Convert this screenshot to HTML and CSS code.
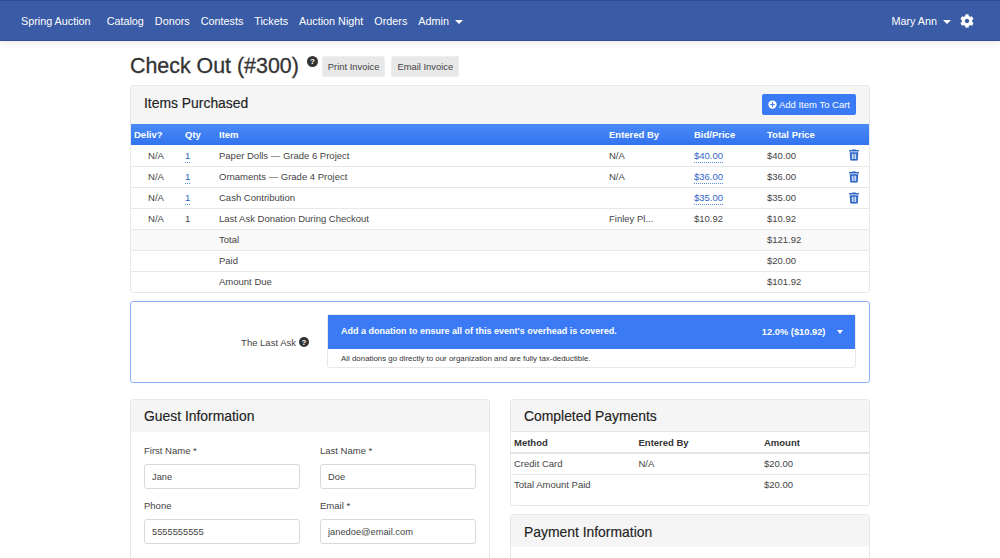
FILE: index.html
```html
<!DOCTYPE html>
<html lang="en">
<head>
<meta charset="utf-8">
<title>Check Out</title>
<link rel="stylesheet" href="styles.css">
</head>
<body>
<nav class="nav">
  <a class="brand">Spring Auction</a>
  <div class="nav-links">
    <a>Catalog</a><a>Donors</a><a>Contests</a><a>Tickets</a><a>Auction Night</a><a>Orders</a>
    <a class="drop">Admin <i class="caret"></i></a>
  </div>
  <div class="nav-right">
    <a class="drop">Mary Ann <i class="caret"></i></a>
    <svg class="gear" viewBox="0 0 512 512"><path fill="#fff" d="M487.4 315.7l-42.6-24.6c4.3-23.2 4.3-47 0-70.2l42.6-24.6c4.9-2.8 7.1-8.6 5.5-14-11.1-35.6-30-67.8-54.7-94.6-3.8-4.1-10-5.1-14.8-2.3L380.8 110c-17.9-15.4-38.5-27.3-60.8-35.1V25.8c0-5.6-3.9-10.5-9.4-11.7-36.7-8.2-74.3-7.8-109.2 0-5.5 1.2-9.4 6.1-9.4 11.7V75c-22.2 7.9-42.8 19.8-60.8 35.1L88.7 85.5c-4.9-2.8-11-1.9-14.8 2.3-24.7 26.7-43.6 58.9-54.7 94.6-1.7 5.4.6 11.2 5.5 14L67.3 221c-4.3 23.2-4.3 47 0 70.2l-42.6 24.6c-4.9 2.8-7.1 8.6-5.5 14 11.1 35.6 30 67.8 54.7 94.6 3.8 4.1 10 5.1 14.8 2.3l42.6-24.6c17.9 15.4 38.5 27.3 60.8 35.1v49.2c0 5.6 3.9 10.5 9.4 11.7 36.7 8.2 74.3 7.8 109.2 0 5.5-1.2 9.4-6.1 9.4-11.7v-49.2c22.2-7.9 42.8-19.8 60.8-35.1l42.6 24.6c4.9 2.8 11 1.9 14.8-2.3 24.7-26.7 43.6-58.9 54.7-94.6 1.5-5.5-.7-11.3-5.6-14.1zM256 336c-44.1 0-80-35.9-80-80s35.9-80 80-80 80 35.9 80 80-35.9 80-80 80z"/></svg>
  </div>
</nav>

<main class="page">
  <header class="title-row">
    <h1>Check Out (#300)</h1>
    <span class="help help-title">?</span>
    <button class="btn-grey">Print Invoice</button>
    <button class="btn-grey">Email Invoice</button>
  </header>

  <section class="card">
    <div class="card-head card-head-items">
      <h2>Items Purchased</h2>
      <button class="btn-blue">
        <svg class="plus" viewBox="0 0 12 12"><circle cx="6" cy="6" r="5.5" fill="#fff"/><path d="M6 3v6M3 6h6" stroke="#3a7bf5" stroke-width="1.6"/></svg>
        Add Item To Cart
      </button>
    </div>
    <table class="items">
      <colgroup><col class="c1"><col class="c2"><col class="c3"><col class="c4"><col class="c5"><col class="c6"><col class="c7"></colgroup>
      <thead>
        <tr><th>Deliv?</th><th>Qty</th><th>Item</th><th>Entered By</th><th>Bid/Price</th><th>Total Price</th><th></th></tr>
      </thead>
      <tbody>
        <tr><td class="na">N/A</td><td><a class="edit">1</a></td><td>Paper Dolls — Grade 6 Project</td><td>N/A</td><td><a class="edit">$40.00</a></td><td>$40.00</td><td class="act"><svg class="trash" viewBox="0 0 448 512"><use href="#trash"/></svg></td></tr>
        <tr><td class="na">N/A</td><td><a class="edit">1</a></td><td>Ornaments — Grade 4 Project</td><td>N/A</td><td><a class="edit">$36.00</a></td><td>$36.00</td><td class="act"><svg class="trash" viewBox="0 0 448 512"><use href="#trash"/></svg></td></tr>
        <tr><td class="na">N/A</td><td><a class="edit">1</a></td><td>Cash Contribution</td><td></td><td><a class="edit">$35.00</a></td><td>$35.00</td><td class="act"><svg class="trash" viewBox="0 0 448 512"><use href="#trash"/></svg></td></tr>
        <tr><td class="na">N/A</td><td>1</td><td>Last Ask Donation During Checkout</td><td>Finley Pl...</td><td>$10.92</td><td>$10.92</td><td></td></tr>
        <tr class="shaded"><td></td><td></td><td>Total</td><td></td><td></td><td>$121.92</td><td></td></tr>
        <tr><td></td><td></td><td>Paid</td><td></td><td></td><td>$20.00</td><td></td></tr>
        <tr><td></td><td></td><td>Amount Due</td><td></td><td></td><td>$101.92</td><td></td></tr>
      </tbody>
    </table>
  </section>

  <section class="ask">
    <div class="ask-label">The Last Ask <span class="help">?</span></div>
    <div class="ask-box">
      <div class="ask-bar">
        <strong class="ask-text">Add a donation to ensure all of this event's overhead is covered.</strong>
        <span class="ask-val">12.0% ($10.92) <i class="caret"></i></span>
      </div>
      <p class="ask-note">All donations go directly to our organization and are fully tax-deductible.</p>
    </div>
  </section>

  <div class="cols">
    <section class="card">
      <div class="card-head"><h2>Guest Information</h2></div>
      <form class="form">
        <label>First Name *<input value="Jane"></label>
        <label>Last Name *<input value="Doe"></label>
        <label>Phone<input value="5555555555"></label>
        <label>Email *<input value="janedoe@email.com"></label>
      </form>
    </section>
    <div class="col-right">
      <section class="card pay-card">
        <div class="card-head card-head-line"><h2>Completed Payments</h2></div>
        <table class="pay">
          <colgroup><col class="p1"><col class="p2"><col></colgroup>
          <thead><tr><th>Method</th><th>Entered By</th><th>Amount</th></tr></thead>
          <tbody>
            <tr><td>Credit Card</td><td>N/A</td><td>$20.00</td></tr>
            <tr><td>Total Amount Paid</td><td></td><td>$20.00</td></tr>
          </tbody>
        </table>
      </section>
      <section class="card">
        <div class="card-head card-head-pay"><h2>Payment Information</h2></div>
        <div class="pay-body"></div>
      </section>
    </div>
  </div>
</main>

<svg class="defs" aria-hidden="true"><symbol id="trash" viewBox="0 0 448 512"><path fill="#2f66c8" d="M432 32H312l-9.4-18.7A24 24 0 0 0 281.1 0H166.8a23.72 23.72 0 0 0-21.4 13.3L136 32H16A16 16 0 0 0 0 48v32a16 16 0 0 0 16 16h416a16 16 0 0 0 16-16V48a16 16 0 0 0-16-16zM53.2 467a48 48 0 0 0 47.9 45h245.8a48 48 0 0 0 47.9-45L416 128H32zM128 200h40v240h-40zm76 0h40v240h-40zm76 0h40v240h-40z" fill-rule="evenodd"/></symbol></svg>
</body>
</html>
```
FILE: styles.css
```css
* { box-sizing: border-box; }
html, body { margin: 0; height: 558px; overflow: hidden; }
body { background: #fff; color: #333; font-family: "Liberation Sans", Arial, sans-serif; font-size: 9.5px; }
.defs { display: none; }

.nav { height: 41px; display: flex; align-items: center; padding: 0 21px; background: #3a5ba5; border-top: 1px solid #2c4c95; border-bottom: 1px solid #2f5099; color: #fff; font-size: 10.8px; box-shadow: 0 2px 8px rgba(0,0,0,.08); }
.brand { margin-right: 16px; }
.nav-links { display: flex; gap: 11px; }
.nav-right { margin-left: auto; display: flex; align-items: center; gap: 9px; padding-right: 5px; }
.caret { display: inline-block; width: 0; height: 0; margin-left: 3px; vertical-align: 1px; border-left: 4px solid transparent; border-right: 4px solid transparent; border-top: 4px solid currentColor; }
.gear { width: 14px; height: 14px; }

.page { width: 740px; margin: 0 auto; }
.title-row { height: 44px; padding-top: 6px; display: flex; align-items: center; }
h1 { margin: 0; font-size: 21.4px; font-weight: 400; color: #333; -webkit-text-stroke: .3px #333; }
.help { display: inline-flex; align-items: center; justify-content: center; width: 10px; height: 10px; border-radius: 50%; background: #333; color: #fff; font-size: 8px; font-weight: 700; }
.help-title { width: 11px; height: 11px; margin: 0 4px 9px 8px; }
.btn-grey { height: 21px; padding: 0 5px; margin-right: 6px; border: 1px solid #eee; border-radius: 2px; background: #e8e8e8; color: #444; font: 9.4px "Liberation Sans", Arial, sans-serif; }

.card { border: 1px solid #e8e8e8; border-radius: 3px; background: #fff; }
.card-head { height: 32px; display: flex; align-items: center; justify-content: space-between; padding: 0 13px; background: #f5f5f5; }
.card-head-items { height: 38px; padding-bottom: 1px; }
.card-head-line { border-bottom: 1px solid #e4e4e4; }
.card-head-pay { padding-top: 1px; }
h2 { margin: 0; font-size: 13.9px; font-weight: 400; color: #222; -webkit-text-stroke: .15px #222; }
.card-head-items h2 { margin-bottom: 3px; }
.btn-blue { height: 21px; padding: 0 6px; display: flex; align-items: center; gap: 2px; border: 0; border-radius: 2px; background: #3a7bf5; color: #fff; font: 9.5px "Liberation Sans", Arial, sans-serif; }
.plus { width: 9px; height: 9px; }

table { width: 100%; border-collapse: collapse; table-layout: fixed; }
th { text-align: left; font-weight: 700; }
.items th { height: 21px; padding: 0 3px; background: linear-gradient(#4a8af8, #3274ee); color: #fff; }
.items td { height: 21px; padding: 0 3px; border-bottom: 1px solid #e8e8e8; color: #444; }
.items tr:last-child td { border-bottom: 0; }
.c1 { width: 51px; } .c2 { width: 34px; } .c3 { width: 390px; } .c4 { width: 85px; } .c5 { width: 73px; } .c6 { width: 77px; }
.items td.na { padding-left: 2px; text-align: center; }
.shaded td { background: #f9f9f9; }
.edit { color: #2f66c8; border-bottom: 1px dotted #5b8ad8; padding-bottom: 1px; }
.trash { display: block; width: 10px; height: 12px; margin-left: 5px; }

.ask { height: 82px; margin-top: 8px; display: flex; align-items: center; justify-content: flex-end; padding: 0 13px; border: 1.5px solid #8ab0f5; border-radius: 3px; }
.ask-label { margin-right: 18px; font-size: 9.5px; display: flex; align-items: center; gap: 3px; color: #444; }
.ask-box { width: 529px; margin-top: -2px; border: 1px solid #e8e8e8; border-radius: 3px; }
.ask-bar { height: 34px; display: flex; align-items: center; justify-content: space-between; padding: 0 12px 0 13px; background: #3a7bf5; color: #fff; }
.ask-text { font-size: 9px; margin-bottom: 2px; }
.ask-val { font-weight: 700; font-size: 9.3px; }
.ask-val .caret { margin-left: 9px; border-left-width: 3.5px; border-right-width: 3.5px; }
.ask-note { height: 18px; margin: 0; padding: 0 13px; display: flex; align-items: center; font-size: 7.9px; color: #333; }

.cols { margin-top: 16px; display: grid; grid-template-columns: 360px 360px; gap: 20px; }
.form { padding: 13px 13px; display: grid; grid-template-columns: 156px 156px; gap: 11px 20px; }
label { display: block; font-size: 9.5px; color: #444; }
input { display: block; width: 100%; height: 25px; margin-top: 8px; padding: 0 7px; border: 1px solid #d8d8d8; border-radius: 3px; color: #444; font: 9.3px "Liberation Sans", Arial, sans-serif; }
.col-right { display: flex; flex-direction: column; gap: 8px; }
.pay-card { height: 107px; }
.p1 { width: 124.5px; } .p2 { width: 125.5px; }
.pay th, .pay td { height: 21px; padding: 0 3px; text-align: left; color: #333; }
.pay th { border-bottom: 2px solid #e4e4e4; }
.pay td { color: #444; }
.pay tbody tr:first-child td { border-bottom: 1px solid #e8e8e8; }
.pay-body { height: 60px; }
```
